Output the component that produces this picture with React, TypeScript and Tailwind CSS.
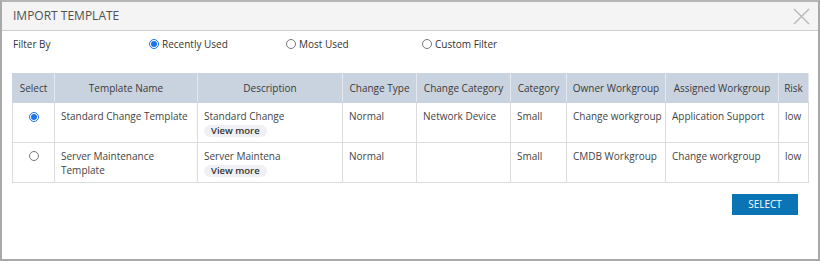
import React, { useState } from "react";

type Row = {
  id: number;
  name: string;
  desc: string;
  changeType: string;
  changeCategory: string;
  category: string;
  owner: string;
  assigned: string;
  risk: string;
};

const rows: Row[] = [
  {
    id: 1,
    name: "Standard Change Template",
    desc: "Standard Change",
    changeType: "Normal",
    changeCategory: "Network Device",
    category: "Small",
    owner: "Change workgroup",
    assigned: "Application Support",
    risk: "low",
  },
  {
    id: 2,
    name: "Server Maintenance Template",
    desc: "Server Maintena",
    changeType: "Normal",
    changeCategory: "",
    category: "Small",
    owner: "CMDB Workgroup",
    assigned: "Change workgroup",
    risk: "low",
  },
];

const headers = [
  { label: "Select", w: "w-[42px]" },
  { label: "Template Name", w: "w-[143px]" },
  { label: "Description", w: "w-[145px]" },
  { label: "Change Type", w: "w-[74px]" },
  { label: "Change Category", w: "w-[94px]" },
  { label: "Category", w: "w-[56px]" },
  { label: "Owner Workgroup", w: "w-[99px]" },
  { label: "Assigned Workgroup", w: "w-[113px]" },
  { label: "Risk", w: "w-[30px]" },
];

function Radio({ checked, onClick }: { checked: boolean; onClick?: () => void }) {
  return (
    <span
      onClick={onClick}
      className={`inline-flex h-[10px] w-[10px] shrink-0 items-center justify-center rounded-full border ${
        checked ? "border-[#1a73e8] bg-white" : "border-[#777] bg-white"
      }`}
    >
      {checked && <span className="h-[6px] w-[6px] rounded-full bg-[#1a73e8]" />}
    </span>
  );
}

export default function App() {
  const [filter, setFilter] = useState("recent");
  const [selected, setSelected] = useState(1);

  const filters = [
    { key: "recent", label: "Recently Used", w: "w-[137px]" },
    { key: "most", label: "Most Used", w: "w-[136px]" },
    { key: "custom", label: "Custom Filter", w: "" },
  ];

  const cell = "border border-[#dcdcdc] px-[6px] pt-[6px] align-top leading-[14px]";
  const nowrap = `${cell} whitespace-nowrap overflow-hidden`;

  return (
    <div
      className="h-[261px] w-[820px] bg-white text-[10px] text-[#444]"
      style={{ fontFamily: '"Open Sans", "Liberation Sans", sans-serif' }}
    >
      <div className="flex h-full flex-col border-2 border-[#a9a9a9] border-t-[#b5b5b5]">
        <div className="flex h-[29px] items-center justify-between border-b border-[#cfcfcf] bg-[#f4f4f4] pl-[11px] pr-[8px]">
          <span className="text-[12px] text-[#505050]">IMPORT TEMPLATE</span>
          <svg className="h-[17px] w-[17px]" viewBox="0 0 17 17" fill="none" stroke="#b4b4b4" strokeWidth="1.2">
            <path d="M1 1l15 15M16 1L1 16" />
          </svg>
        </div>

        <div className="flex items-center pl-[11px] pt-[6px] leading-[14px] text-[#333]">
          <span className="w-[136px]">Filter By</span>
          {filters.map((f) => (
            <label
              key={f.key}
              className={`flex cursor-pointer items-center gap-[3px] ${f.w}`}
              onClick={() => setFilter(f.key)}
            >
              <Radio checked={filter === f.key} />
              <span>{f.label}</span>
            </label>
          ))}
        </div>

        <div className="px-[10px] pt-[22px]">
          <table className="w-[796px] table-fixed border-collapse">
            <colgroup>
              {headers.map((h) => (
                <col key={h.label} className={h.w} />
              ))}
            </colgroup>
            <thead>
              <tr className="h-[29px] bg-[#c9d3e0]">
                {headers.map((h) => (
                  <th
                    key={h.label}
                    className="whitespace-nowrap border border-[#c9d3e0] border-r-[#e4e8ee] px-[4px] text-center font-normal text-[#3a3a3a]"
                  >
                    {h.label}
                  </th>
                ))}
              </tr>
            </thead>
            <tbody>
              {rows.map((r) => (
                <tr key={r.id} className="h-[40px]">
                  <td className={`${cell} text-center`}>
                    <span className="inline-flex pt-[2px]">
                      <Radio checked={selected === r.id} onClick={() => setSelected(r.id)} />
                    </span>
                  </td>
                  <td className={cell}>{r.name}</td>
                  <td className={cell}>
                    <div>{r.desc}</div>
                    <span className="mt-[1px] inline-block rounded-[7px] bg-[#eef0f4] px-[7px] text-[9.5px] font-semibold leading-[12px] text-[#333]">
                      View more
                    </span>
                  </td>
                  <td className={nowrap}>{r.changeType}</td>
                  <td className={nowrap}>{r.changeCategory}</td>
                  <td className={nowrap}>{r.category}</td>
                  <td className={`${nowrap} pr-[2px]`}>{r.owner}</td>
                  <td className={nowrap}>{r.assigned}</td>
                  <td className={nowrap}>{r.risk}</td>
                </tr>
              ))}
            </tbody>
          </table>
        </div>

        <div className="flex justify-end pr-[20px] pt-[11px]">
          <button className="h-[21px] w-[66px] bg-[#0b74b5] text-[10px] uppercase text-white">Select</button>
        </div>
      </div>
    </div>
  );
}
